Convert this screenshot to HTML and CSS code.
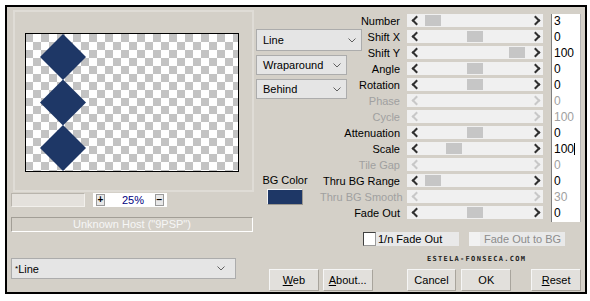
FILE: index.html
```html
<!DOCTYPE html>
<html lang="en">
<head>
  <meta charset="UTF-8">
  <link rel="stylesheet" href="styles.css">
  <title>Line</title>
</head>
<body>
  <div class="dialog">
    <div class="left">
      <div class="panel">
        <div class="preview">
          <svg width="212" height="137" viewBox="0 0 212 137">
            <polygon class="tile" points="37,0 60,23 37,46 14,23"/>
            <polygon class="tile" points="37,45.5 60,68.5 37,91.5 14,68.5"/>
            <polygon class="tile" points="37,91 60,114 37,137 14,114"/>
          </svg>
        </div>
      </div>

      <div class="zoom-row">
        <div class="zoom-bar"></div>
        <div class="zoom-box">
          <span class="zoom-btn">+</span>
          <span class="zoom-value">25%</span>
          <span class="zoom-btn">&minus;</span>
        </div>
      </div>

      <div class="host">Unknown Host ("9PSP")</div>

      <div class="select preset">
        <span><small>*</small>Line</span>
        <svg class="chevron" width="8" height="5"><polyline points="0.5,0.5 4,4 7.5,0.5"/></svg>
      </div>
    </div>

    <div class="right">
      <div class="params">
        <div class="side">
          <div class="select select-line">
            <span>Line</span>
            <svg class="chevron" width="8" height="5"><polyline points="0.5,0.5 4,4 7.5,0.5"/></svg>
          </div>
          <div class="select select-short">
            <span>Wraparound</span>
            <svg class="chevron" width="8" height="5"><polyline points="0.5,0.5 4,4 7.5,0.5"/></svg>
          </div>
          <div class="select select-short">
            <span>Behind</span>
            <svg class="chevron" width="8" height="5"><polyline points="0.5,0.5 4,4 7.5,0.5"/></svg>
          </div>
          <div class="bg-color">
            <span>BG Color</span>
            <div class="swatch"></div>
          </div>
        </div>

        <div class="label">Number</div>
        <div class="slider"><span class="arrow arrow-l"></span><div class="track"><div class="thumb" style="margin-left: 0px"></div></div><span class="arrow arrow-r"></span></div>
        <div class="value">3</div>

        <div class="label">Shift X</div>
        <div class="slider"><span class="arrow arrow-l"></span><div class="track"><div class="thumb" style="margin-left: 42px"></div></div><span class="arrow arrow-r"></span></div>
        <div class="value">0</div>

        <div class="label">Shift Y</div>
        <div class="slider"><span class="arrow arrow-l"></span><div class="track"><div class="thumb" style="margin-left: 84px"></div></div><span class="arrow arrow-r"></span></div>
        <div class="value">100</div>

        <div class="label">Angle</div>
        <div class="slider"><span class="arrow arrow-l"></span><div class="track"><div class="thumb" style="margin-left: 42px"></div></div><span class="arrow arrow-r"></span></div>
        <div class="value">0</div>

        <div class="label">Rotation</div>
        <div class="slider"><span class="arrow arrow-l"></span><div class="track"><div class="thumb" style="margin-left: 42px"></div></div><span class="arrow arrow-r"></span></div>
        <div class="value">0</div>

        <div class="label disabled">Phase</div>
        <div class="slider disabled"><span class="arrow arrow-l"></span><div class="track"></div><span class="arrow arrow-r"></span></div>
        <div class="value disabled">0</div>

        <div class="label disabled">Cycle</div>
        <div class="slider disabled"><span class="arrow arrow-l"></span><div class="track"></div><span class="arrow arrow-r"></span></div>
        <div class="value disabled">100</div>

        <div class="label">Attenuation</div>
        <div class="slider"><span class="arrow arrow-l"></span><div class="track"><div class="thumb" style="margin-left: 42px"></div></div><span class="arrow arrow-r"></span></div>
        <div class="value">0</div>

        <div class="label">Scale</div>
        <div class="slider"><span class="arrow arrow-l"></span><div class="track"><div class="thumb" style="margin-left: 21px"></div></div><span class="arrow arrow-r"></span></div>
        <div class="value">100<span class="caret"></span></div>

        <div class="label disabled">Tile Gap</div>
        <div class="slider disabled"><span class="arrow arrow-l"></span><div class="track"></div><span class="arrow arrow-r"></span></div>
        <div class="value disabled">0</div>

        <div class="label">Thru BG Range</div>
        <div class="slider"><span class="arrow arrow-l"></span><div class="track"><div class="thumb" style="margin-left: 0px"></div></div><span class="arrow arrow-r"></span></div>
        <div class="value">0</div>

        <div class="label disabled">Thru BG Smooth</div>
        <div class="slider disabled"><span class="arrow arrow-l"></span><div class="track"></div><span class="arrow arrow-r"></span></div>
        <div class="value disabled">30</div>

        <div class="label">Fade Out</div>
        <div class="slider"><span class="arrow arrow-l"></span><div class="track"><div class="thumb" style="margin-left: 42px"></div></div><span class="arrow arrow-r"></span></div>
        <div class="value">0</div>
      </div>

      <div class="checks">
        <span class="check"></span>
        <span class="check-label">1/n Fade Out</span>
        <span class="check check-off"></span>
        <span class="check-label check-label-off">Fade Out to BG</span>
      </div>

      <div class="site">ESTELA-FONSECA.COM</div>

      <div class="buttons">
        <button class="btn"><u>W</u>eb</button>
        <button class="btn"><u>A</u>bout...</button>
        <button class="btn btn-cancel">Cancel</button>
        <button class="btn">OK</button>
        <button class="btn btn-reset"><u>R</u>eset</button>
      </div>
    </div>
  </div>
</body>
</html>
```

FILE: styles.css
```css
* {
  box-sizing: border-box;
}

body {
  margin: 0;
  padding: 5px;
  background-color: #fff;
  font-family: "Liberation Sans", Arial, sans-serif;
  font-size: 11px;
  color: #000;
}

.dialog {
  display: flex;
  width: 582px;
  height: 289px;
  border: 2px solid #000;
  background-color: #d4d0c8;
}

/* left side: preview and presets */
.left {
  width: 247px;
  padding: 3px 0 0 4px;
  display: flex;
  flex-direction: column;
}

.panel {
  width: 241px;
  height: 182px;
  margin-left: 2px;
  border: 2px solid #dfdcd6;
  padding: 21px 0 0 10px;
}

.preview {
  width: 214px;
  height: 139px;
  border: 1px solid #000;
  background-color: #fff;
  background-image:
    linear-gradient(45deg, #c3c3c3 25%, transparent 25%, transparent 75%, #c3c3c3 75%),
    linear-gradient(45deg, #c3c3c3 25%, transparent 25%, transparent 75%, #c3c3c3 75%);
  background-size: 16px 16px;
  background-position: 7px 0, 15px 8px;
}

.preview svg {
  display: block;
}

.tile {
  fill: #1e3766;
}

.zoom-row {
  display: flex;
  margin-top: 1px;
  height: 14px;
}

.zoom-bar {
  width: 74px;
  border: 1px solid;
  border-color: #b8b4ac #f2f0ec #f2f0ec #b8b4ac;
  background-color: #e4e1dc;
}

.zoom-box {
  display: flex;
  align-items: center;
  width: 74px;
  margin-left: 8px;
  padding: 0 3px;
  background-color: #fff;
}

.zoom-btn {
  width: 9px;
  height: 12px;
  border: 1px solid #9a9a9a;
  background-color: #e8e8e8;
  font-size: 10px;
  font-weight: bold;
  line-height: 9px;
  text-align: center;
}

.zoom-value {
  flex: 1;
  text-align: center;
  color: #000080;
  font-size: 11px;
  padding-left: 6px;
}

.host {
  margin-top: 10px;
  width: 242px;
  height: 15px;
  border: 1px solid;
  border-color: #a29e96 #fff #fff #a29e96;
  color: #f6f6f6;
  text-align: center;
  line-height: 13px;
}

.select {
  display: flex;
  align-items: center;
  justify-content: space-between;
  border: 1px solid #acacac;
  background-color: #e5e5e5;
  padding: 0 5px 0 6px;
  font-size: 11px;
}

.select small {
  font-size: 8px;
  vertical-align: 2px;
}

.chevron polyline {
  fill: none;
  stroke: #606060;
  stroke-width: 1;
}

.preset {
  margin-top: 26px;
  width: 225px;
  height: 21px;
  padding-left: 3px;
  padding-right: 10px;
}

/* right side: parameters */
.right {
  width: 331px;
  padding: 7px 0 0 2px;
}

.params {
  display: grid;
  grid-template-columns: 64px 81px 142px 38px;
  grid-auto-rows: 16px;
}

.side {
  grid-column: 1;
  grid-row: 1 / span 13;
  padding-top: 15px;
}

.select-line {
  width: 106px;
  height: 22px;
}

.select-short {
  width: 91px;
  height: 20px;
  margin-top: 4px;
}

.bg-color {
  display: flex;
  flex-direction: column;
  align-items: center;
  width: 44px;
  margin: 75px 0 0 7px;
  white-space: nowrap;
}

.swatch {
  width: 36px;
  height: 16px;
  margin-top: 3px;
  border: 1px solid;
  border-color: #f4f4f4 #9c9890 #9c9890 #f4f4f4;
  background-color: #1e3766;
}

.label {
  grid-column: 2;
  text-align: right;
  padding-right: 1px;
  line-height: 14px;
  white-space: nowrap;
}

.slider {
  grid-column: 3;
  display: flex;
  align-items: center;
  width: 136px;
  height: 13px;
  margin-left: 6px;
  background-color: #f0f0f0;
}

.arrow {
  display: flex;
  justify-content: center;
  width: 18px;
}

.arrow::before {
  content: "";
  width: 5px;
  height: 5px;
  border-left: 2px solid #303030;
  border-bottom: 2px solid #303030;
}

.arrow-l::before {
  transform: rotate(45deg);
  margin-left: 1px;
}

.arrow-r::before {
  transform: rotate(-135deg);
  margin-left: 2px;
}

.slider.disabled .arrow::before {
  border-color: #c8c8c8;
}

.track {
  flex: 1;
  height: 11px;
}

.thumb {
  width: 16px;
  height: 11px;
  background-color: #c6c6c6;
}

.value {
  grid-column: 4;
  width: 30px;
  margin-left: 8px;
  background-color: #fff;
  border-left: 1px solid #808080;
  border-right: 1px solid #b4b4b4;
  padding-left: 2px;
  font-size: 12px;
  line-height: 15px;
}

.caret {
  display: inline-block;
  width: 1px;
  height: 12px;
  background-color: #000;
  vertical-align: -2px;
}

.disabled {
  color: #a0a0a0;
}

.checks {
  display: flex;
  align-items: center;
  margin-top: 10px;
  padding-left: 107px;
  height: 14px;
}

.check {
  width: 13px;
  height: 14px;
  border: 1px solid;
  border-color: #404040 #9a9a9a #9a9a9a #404040;
  background-color: #fff;
}

.check-off {
  width: 11px;
  margin-left: 10px;
  border: none;
  background-color: #f2f2f2;
}

.check-label {
  width: 83px;
  height: 14px;
  padding-left: 2px;
  background-color: #e9e9e9;
  line-height: 14px;
}

.check-label-off {
  width: 85px;
  padding-left: 4px;
  color: #8c8c8c;
}

.site {
  margin-top: 9px;
  padding-left: 171px;
  font-family: "DejaVu Sans Mono", monospace;
  font-size: 7px;
  font-weight: bold;
  letter-spacing: 1.3px;
  line-height: 8px;
  color: #222;
}

.buttons {
  display: flex;
  margin-top: 6px;
  padding-left: 13px;
}

.btn {
  width: 50px;
  height: 22px;
  margin-right: 4px;
  padding: 0;
  border: 1px solid;
  border-color: #f6f6f6 #a8a49c #a8a49c #f6f6f6;
  background-color: #e2e0dc;
  font-family: "Liberation Sans", Arial, sans-serif;
  font-size: 11px;
  color: #000;
}

.btn-cancel {
  margin-left: 30px;
  margin-right: 5px;
}

.btn-reset {
  margin-left: 16px;
}
```
